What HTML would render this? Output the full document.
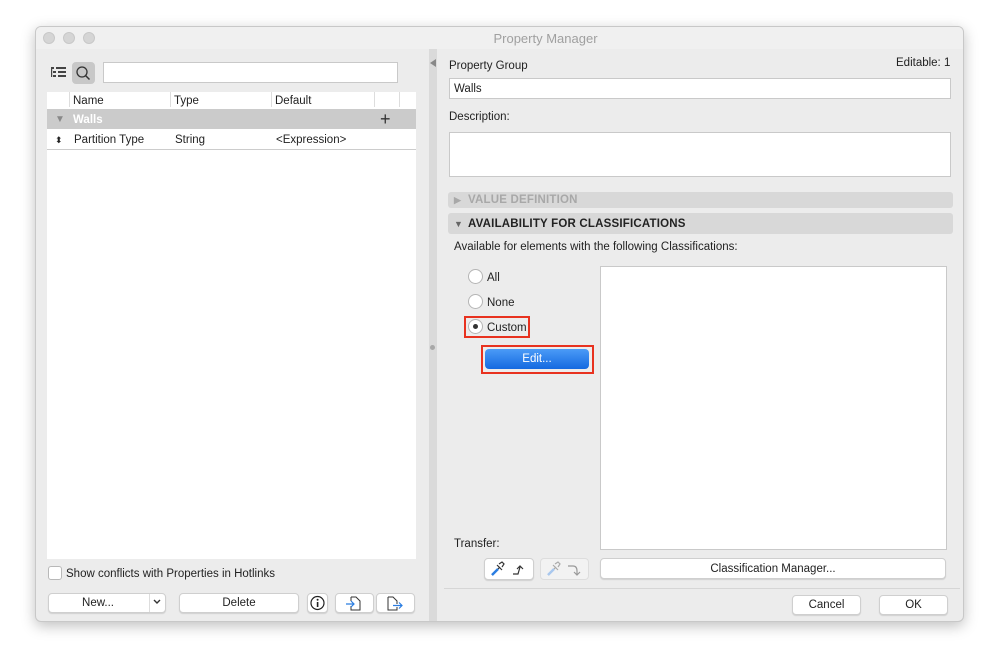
<!DOCTYPE html>
<html><head><style>
*{box-sizing:border-box;margin:0;padding:0}
body{width:999px;height:665px;background:#fff;font-family:"Liberation Sans",sans-serif;font-size:11px;color:#222;position:relative;overflow:hidden}
.a{position:absolute}
.win{left:35px;top:26px;width:929px;height:596px;background:#ececec;border:1px solid #c8c8c8;border-radius:6px;box-shadow:0 4px 14px rgba(0,0,0,.25);overflow:hidden}
.tl{width:12px;height:12px;border-radius:50%;background:#d5d5d5;border:1px solid #c8c8c8;top:5px}
.btn{background:#fff;border:1px solid #cfcfcf;border-radius:4px;box-shadow:0 1px 1px rgba(0,0,0,.12);text-align:center;font-size:11.5px;line-height:18px}
.field{background:#fff;border:1px solid #c9c9c9}
.radio{width:15px;height:15px;border-radius:50%;background:#fff;border:1px solid #b5b5b5}
.sec{background:#d8d8d8;border-radius:3px;font-weight:bold;font-size:11.5px;line-height:16px;padding-left:20px;letter-spacing:.2px}
.red{border:2px solid #e8321f}
</style></head><body>
<div class="a win">
<div class="a" style="left:0;top:0;width:929px;height:22px;background:#f0f0f0"></div>
<div class="a tl" style="left:7px"></div><div class="a tl" style="left:27px"></div><div class="a tl" style="left:47px"></div>
<div class="a" style="left:0;top:1px;width:929px;text-align:center;line-height:22px;font-size:13px;color:#a0a0a0;padding-left:90px">Property Manager</div>
<div class="a" style="left:393px;top:22px;width:8px;height:574px;background:#dadada"></div>
<div class="a" style="left:394px;top:32px;width:0;height:0;border-top:4px solid transparent;border-bottom:4px solid transparent;border-right:6px solid #888"></div>
<div class="a" style="left:394px;top:318px;width:5px;height:5px;border-radius:50%;background:#a8a8a8"></div>
</div>
<!-- left pane -->
<svg class="a" style="left:50px;top:66px" width="18" height="14"><g fill="#444"><rect x="1" y="1" width="3" height="2"/><rect x="6" y="1" width="10" height="2"/><rect x="3" y="5" width="3" height="2"/><rect x="8" y="5" width="8" height="2"/><rect x="3" y="9" width="3" height="2"/><rect x="8" y="9" width="8" height="2"/><rect x="1" y="1" width="1.2" height="10"/></g></svg>
<div class="a" style="left:72px;top:62px;width:23px;height:22px;background:#c8c8c8;border-radius:4px"></div>
<svg class="a" style="left:75px;top:65px" width="17" height="17"><circle cx="7" cy="7" r="5" fill="none" stroke="#333" stroke-width="1.3"/><line x1="10.5" y1="10.5" x2="14.5" y2="14.5" stroke="#333" stroke-width="1.5"/></svg>
<div class="a field" style="left:103px;top:62px;width:295px;height:21px"></div>
<div class="a" style="left:47px;top:92px;width:369px;height:467px;background:#fff"></div>
<div class="a" style="left:47px;top:92px;width:369px;height:16px;line-height:16px;font-size:11.5px">
<span class="a" style="left:26px;top:1px">Name</span><span class="a" style="left:127px;top:1px">Type</span><span class="a" style="left:228px;top:1px">Default</span>
<div class="a" style="left:22px;top:0;width:1px;height:15px;background:#ddd"></div><div class="a" style="left:123px;top:0;width:1px;height:15px;background:#ddd"></div><div class="a" style="left:224px;top:0;width:1px;height:15px;background:#ddd"></div><div class="a" style="left:327px;top:0;width:1px;height:15px;background:#ddd"></div><div class="a" style="left:352px;top:0;width:1px;height:15px;background:#ddd"></div></div>
<div class="a" style="left:47px;top:109px;width:369px;height:20px;background:#cbcbcb;color:#fff;font-weight:bold;line-height:20px;font-size:11.5px"><span class="a" style="left:8px;top:1px;color:#888;font-size:10px">▼</span><span class="a" style="left:26px;top:1px">Walls</span><span class="a" style="left:333px;color:#333;font-weight:normal;font-size:18px">+</span></div>
<div class="a" style="left:47px;top:130px;width:369px;height:20px;border-bottom:1px solid #ccc;line-height:19px;font-size:11.5px"><span class="a" style="left:8px;font-size:9px;top:1px">⬍</span><span class="a" style="left:27px;top:1px">Partition Type</span><span class="a" style="left:128px;top:1px">String</span><span class="a" style="left:229px;top:1px">&lt;Expression&gt;</span></div>
<div class="a" style="left:48px;top:566px;width:14px;height:14px;background:#fff;border:1px solid #b8b8b8;border-radius:3px"></div>
<div class="a" style="left:66px;top:568px;font-size:11.5px">Show conflicts with Properties in Hotlinks</div>
<div class="a btn" style="left:48px;top:593px;width:118px;height:20px;line-height:19px"><span style="margin-right:18px">New...</span></div>
<div class="a" style="left:149px;top:594px;width:1px;height:18px;background:#ddd"></div>
<svg class="a" style="left:152px;top:598px" width="10" height="8"><path d="M2 2l3 3 3-3" fill="none" stroke="#333" stroke-width="1.4"/></svg>
<div class="a btn" style="left:179px;top:593px;width:120px;height:20px;line-height:19px">Delete</div>
<div class="a btn" style="left:307px;top:593px;width:21px;height:20px"></div>
<svg class="a" style="left:309px;top:595px" width="17" height="16"><circle cx="8.5" cy="8" r="6.5" fill="none" stroke="#222" stroke-width="1.2"/><rect x="7.8" y="7" width="1.6" height="5" fill="#222"/><circle cx="8.6" cy="4.8" r="1" fill="#222"/></svg>
<div class="a btn" style="left:335px;top:593px;width:39px;height:20px"></div>
<svg class="a" style="left:344px;top:595px" width="20" height="17"><path d="M7 2h5l4 4v9H7v-4M7 6V2" fill="none" stroke="#333" stroke-width="1"/><path d="M2 9h8M7 6l3 3-3 3" fill="none" stroke="#2a7de1" stroke-width="1.2"/></svg>
<div class="a btn" style="left:376px;top:593px;width:39px;height:20px"></div>
<svg class="a" style="left:385px;top:595px" width="20" height="17"><path d="M3 2h5l4 4v3M12 12v3H3V2" fill="none" stroke="#333" stroke-width="1"/><path d="M8 10.5h9M14 7.5l3 3-3 3" fill="none" stroke="#2a7de1" stroke-width="1.2"/></svg>
<!-- right pane -->
<div class="a" style="left:449px;top:60px;font-size:11.5px">Property Group</div>
<div class="a" style="left:896px;top:57px;font-size:11.5px">Editable: 1</div>
<div class="a field" style="left:449px;top:78px;width:502px;height:21px;padding-left:4px;line-height:20px;font-size:11.5px">Walls</div>
<div class="a" style="left:449px;top:111px;font-size:11.5px">Description:</div>
<div class="a field" style="left:449px;top:132px;width:502px;height:45px"></div>
<div class="a sec" style="left:448px;top:192px;width:505px;height:16px;color:#a8a8a8"><span class="a" style="left:6px;font-size:9px">▶</span>VALUE DEFINITION</div>
<div class="a sec" style="left:448px;top:213px;width:505px;height:21px;line-height:22px;color:#222"><span class="a" style="left:6px;font-size:9px;color:#666">▼</span>AVAILABILITY FOR CLASSIFICATIONS</div>
<div class="a" style="left:454px;top:241px;font-size:11.5px">Available for elements with the following Classifications:</div>
<div class="a radio" style="left:468px;top:269px"></div><div class="a" style="left:487px;top:272px;font-size:11.5px">All</div>
<div class="a radio" style="left:468px;top:294px"></div><div class="a" style="left:487px;top:297px;font-size:11.5px">None</div>
<div class="a red" style="left:464px;top:316px;width:66px;height:22px"></div>
<div class="a radio" style="left:468px;top:319px"></div><div class="a" style="left:473px;top:324px;width:5px;height:5px;border-radius:50%;background:#333"></div>
<div class="a" style="left:487px;top:322px;font-size:11.5px">Custom</div>
<div class="a red" style="left:481px;top:345px;width:113px;height:29px"></div>
<div class="a" style="left:485px;top:349px;width:104px;height:20px;border-radius:4px;background:linear-gradient(#4b9bf7,#1469e0);color:#fff;text-align:center;line-height:21px;font-size:11.5px">Edit...</div>
<div class="a field" style="left:600px;top:266px;width:347px;height:284px"></div>
<div class="a" style="left:454px;top:538px;font-size:11.5px">Transfer:</div>
<div class="a btn" style="left:484px;top:558px;width:50px;height:22px"></div>
<svg class="a" style="left:488px;top:560px" width="44" height="18"><path d="M4 15l8-8M9 5l5 5M11 4l3-2 2 2-2 3" fill="none" stroke="#333" stroke-width="1.2"/><path d="M4 15l6-6" stroke="#2a7de1" stroke-width="2.5"/><path d="M25 14h5l2-7M29 9l3-3 3 3" fill="none" stroke="#333" stroke-width="1.2"/></svg>
<div class="a btn" style="left:540px;top:558px;width:49px;height:22px;background:#f2f2f2;box-shadow:none;border-color:#ddd"></div>
<svg class="a" style="left:544px;top:560px" width="44" height="18"><path d="M4 15l8-8M9 5l5 5M11 4l3-2 2 2-2 3" fill="none" stroke="#aaa" stroke-width="1.2"/><path d="M4 15l6-6" stroke="#a9c8ee" stroke-width="2.5"/><path d="M24 6h5q4 0 4 5v4M30 12l3 3 3-3" fill="none" stroke="#999" stroke-width="1.2"/></svg>
<div class="a btn" style="left:600px;top:558px;width:346px;height:21px;line-height:20px">Classification Manager...</div>
<div class="a" style="left:444px;top:588px;width:516px;height:1px;background:#d6d6d6"></div>
<div class="a btn" style="left:792px;top:595px;width:69px;height:20px;line-height:19px">Cancel</div>
<div class="a btn" style="left:879px;top:595px;width:69px;height:20px;line-height:19px">OK</div>
</body></html>
